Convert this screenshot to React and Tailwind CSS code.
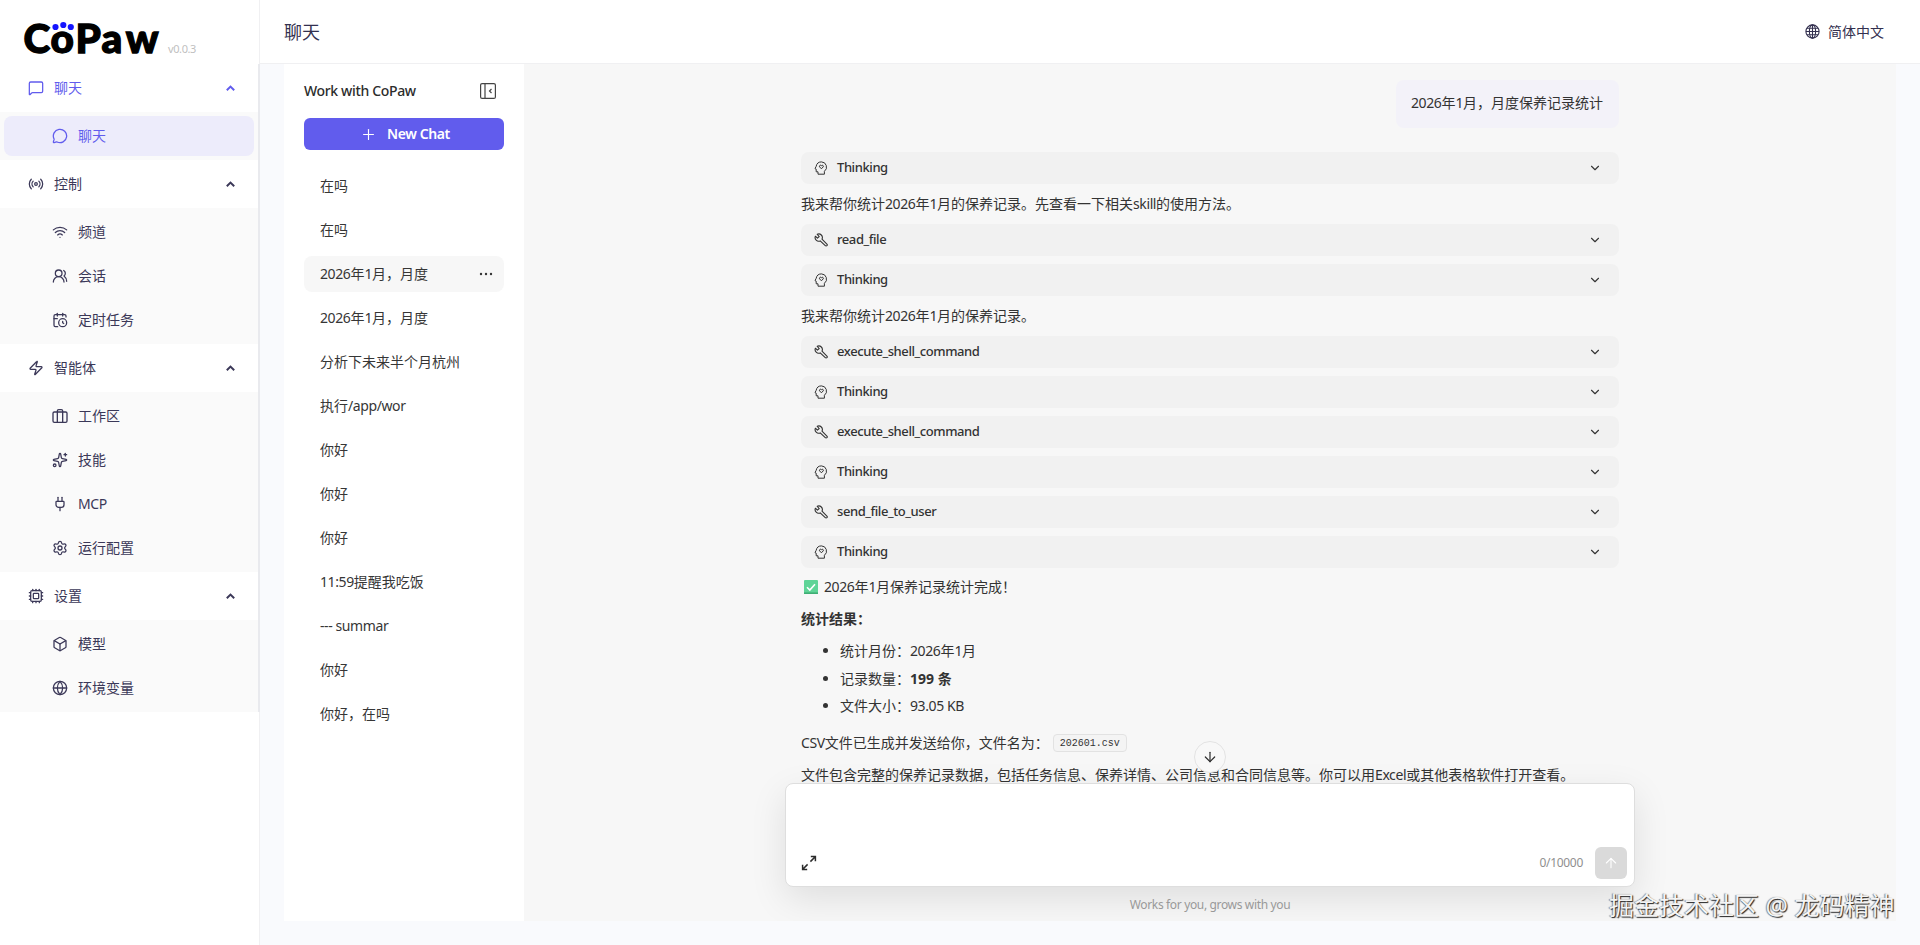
import React from 'react';
import {
    MessageSquare, MessageCircle, Radio, Wifi, UsersRound, CalendarClock, Zap,
    Sparkles, Plug, Settings, Cpu, Box, Globe, ChevronDown, ArrowDown, ArrowUp, Plus
} from 'lucide-react';

const menu = [
    {
        label: '聊天', icon: MessageSquare, active: true,
        items: [{ label: '聊天', icon: MessageCircle, active: true }],
    },
    {
        label: '控制', icon: Radio,
        items: [
            { label: '频道', icon: Wifi },
            { label: '会话', icon: UsersRound },
            { label: '定时任务', icon: CalendarClock },
        ],
    },
    {
        label: '智能体', icon: Zap,
        items: [
            { label: '工作区', icon: WorkspaceIcon },
            { label: '技能', icon: Sparkles },
            { label: 'MCP', icon: Plug },
            { label: '运行配置', icon: Settings },
        ],
    },
    {
        label: '设置', icon: Cpu,
        items: [
            { label: '模型', icon: Box },
            { label: '环境变量', icon: Globe },
        ],
    },
];

const chats = [
    '在吗', '在吗', '2026年1月，月度', '2026年1月，月度', '分析下未来半个月杭州', '执行/app/wor',
    '你好', '你好', '你好', '11:59提醒我吃饭', '--- summar', '你好', '你好，在吗',
];

// Latin letters and digits are set a little tighter than the Chinese around them
const Mixed = ({ children }) => (
    <span>
        {children.split(/([\x20-\x7e]+)/).map((part, i) => (
            i % 2 ? <span key={i} className="tracking-[-0.4px]">{part}</span> : part
        ))}
    </span>
);

function WorkspaceIcon({ className }) {
    return (
        <svg className={className} viewBox="0 0 24 24" fill="none" stroke="currentColor" strokeWidth="2" strokeLinejoin="round">
            <rect x="1.5" y="6" width="21" height="15.5" rx="2" />
            <path d="M8 21V4.5a2 2 0 0 1 2-2h4a2 2 0 0 1 2 2V21" />
        </svg>
    );
}

function Logo() {
    return (
        <svg className="w-[138px] h-[36px] overflow-visible font-['Lato',sans-serif] font-black" viewBox="0 0 138 36">
            <text x="0.6 27.6 52.4 78.5 102.8" y="32" fontSize="40.5" stroke="#000" strokeWidth="1.3">CoPaw</text>
            <circle cx="32.5" cy="6" r="3.1" fill="#1414ff" />
            <circle cx="40.3" cy="4" r="3.1" fill="#1414ff" />
            <circle cx="47.8" cy="6" r="3.1" fill="#1414ff" />
        </svg>
    );
}

function ThinkIcon() {
    return (
        <svg className="w-[14px] h-[14px]" viewBox="0 0 14 14" fill="none" stroke="currentColor" strokeWidth="1" strokeLinejoin="round">
            <path d="M4 13.2v-2.4H2.2V8.2L1 7.6l1.2-2.3A5.3 5.3 0 0 1 7.4.9a5.2 5.2 0 0 1 3 9.4v2.9z" />
            <path d="M7.4 7.8L5.6 5.9a1 1 0 0 1 1.8-1.2 1 1 0 0 1 1.8 1.2z" />
        </svg>
    );
}

function ToolIcon() {
    return (
        <svg className="w-[14px] h-[14px]" viewBox="0 0 14 14" fill="none" stroke="currentColor" strokeWidth="1.1" strokeLinejoin="round">
            <path d="M3.2 1.3A3.6 3.6 0 0 1 8 6.1l4.9 5a1.1 1.1 0 0 1-1.6 1.6L6.2 7.9A3.6 3.6 0 0 1 1.4 3.2l2 2 1.8-1.7z" />
        </svg>
    );
}

const LanguageIcon = () => (
    <svg className="w-[15px] h-[15px]" viewBox="0 0 15 15" fill="none" stroke="currentColor" strokeWidth="1.1">
        <circle cx="7.5" cy="7.5" r="6.6" />
        <ellipse cx="7.5" cy="7.5" rx="3.1" ry="6.6" />
        <path d="M7.5 1v13M1 7.5h13M1.9 4.3h11.2M1.9 10.7h11.2" />
    </svg>
);

const Sidebar = () => (
    <aside className="w-[260px] shrink-0 bg-white border-r border-[#f0f0f2]">
        <div className="h-16 pl-[23px] pt-[21px] flex items-start">
            <Logo />
            <span className="text-[11px] leading-[16px] tracking-[-0.4px] text-[#bfbfbf] mt-[20px] ml-[7px]">v0.0.3</span>
        </div>
        <nav className="border-r-2 border-[#e9eaee] -mr-px">
            {menu.map(({ label, icon: Icon, active, items }) => (
                <div key={label}>
                    <div className={`h-12 pl-7 pr-[23px] flex items-center ${active ? 'text-[#615ced]' : 'text-[#3b3858]'}`}>
                        <Icon className="w-4 h-4" strokeWidth={1.9} />
                        <span className="ml-[10px] -mt-[2px] flex-1">{label}</span>
                        <svg className="w-[9px] h-[6px]" viewBox="0 0 9 6" fill="none" stroke="currentColor" strokeWidth="2">
                            <path d="M.8 5.2l3.7-3.6 3.7 3.6" />
                        </svg>
                    </div>
                    <div className="bg-[#fafafa] px-1 py-1 flex flex-col gap-1">
                        {items.map(({ label: name, icon: ItemIcon, active: selected }) => (
                            <div
                                key={name}
                                className={`h-10 pl-12 rounded-lg flex items-center ${selected ? 'bg-[#edecfb] text-[#615ced]' : 'text-[#3b3858]'}`}
                            >
                                <ItemIcon className="w-4 h-4" strokeWidth={1.9} />
                                <span className="ml-[10px] -mt-[2px]"><Mixed>{name}</Mixed></span>
                            </div>
                        ))}
                    </div>
                </div>
            ))}
        </nav>
    </aside>
);

const ChatList = () => (
    <section className="w-60 shrink-0 bg-white px-5">
        <div className="h-[54px] flex items-center justify-between">
            <span className="font-medium tracking-[-0.35px] text-[#2c2c2c] -mt-px">Work with CoPaw</span>
            <svg className="w-4 h-4 mr-2 text-[#444]" viewBox="0 0 16 16" fill="none" stroke="currentColor" strokeWidth="1.2">
                <rect x=".6" y=".6" width="14.8" height="14.8" rx="1.5" />
                <path d="M5 1v14M11.5 6L9.5 8l2 2" />
            </svg>
        </div>
        <button className="w-full h-8 rounded-md bg-[#615ced] text-white font-semibold tracking-[-0.4px] flex items-center justify-center pl-[2px]">
            <Plus className="w-[17px] h-[17px] mr-[10px]" strokeWidth={1.6} />
            <span className="-mt-px">New Chat</span>
        </button>
        <div className="mt-[18px] flex flex-col gap-2">
            {chats.map((title, i) => (
                <div
                    key={i}
                    className={`h-9 px-4 pb-[2px] rounded-lg flex items-center justify-between text-[#363636] ${i === 2 ? 'bg-[#f7f7f7]' : ''}`}
                >
                    <Mixed>{title}</Mixed>
                    {i === 2 && (
                        <svg className="w-[14px] h-[4px] -mr-[5px] mt-px" viewBox="0 0 14 4" fill="currentColor">
                            <circle cx="2" cy="2" r="1.2" /><circle cx="7" cy="2" r="1.2" /><circle cx="12" cy="2" r="1.2" />
                        </svg>
                    )}
                </div>
            ))}
        </div>
    </section>
);

const Step = ({ name }) => (
    <div className="h-8 pl-[13px] pr-[14px] rounded-lg bg-[#f1f1f1] flex items-center text-[13px] font-medium">
        {name === 'Thinking' ? <ThinkIcon /> : <ToolIcon />}
        <span className="ml-[9px] flex-1 tracking-[-0.42px]">{name}</span>
        <ChevronDown className="w-[14px] h-[14px] mr-[3px]" strokeWidth={1.9} />
    </div>
);

const Conversation = () => (
    <div className="w-[818px] mx-auto text-[#333]">
        <div className="flex justify-end pt-4">
            <div className="h-12 pl-[15px] pr-4 pb-[3px] rounded-lg bg-[#f3f2f9] flex items-center"><Mixed>2026年1月，月度保养记录统计</Mixed></div>
        </div>
        <div className="mt-6 flex flex-col gap-2">
            <Step name="Thinking" />
            <p className="h-6 leading-6"><Mixed>我来帮你统计2026年1月的保养记录。先查看一下相关skill的使用方法。</Mixed></p>
            <Step name="read_file" />
            <Step name="Thinking" />
            <p className="h-6 leading-6"><Mixed>我来帮你统计2026年1月的保养记录。</Mixed></p>
            <Step name="execute_shell_command" />
            <Step name="Thinking" />
            <Step name="execute_shell_command" />
            <Step name="Thinking" />
            <Step name="send_file_to_user" />
            <Step name="Thinking" />
            <div className="leading-6 -mt-px">
                <p className="flex items-center">
                    <svg className="w-[14px] h-[14px] ml-[3px] mr-[6px]" viewBox="0 0 14 14">
                        <rect width="14" height="14" rx="1" fill="#5fd497" />
                        <path d="M0 13.2h14" stroke="#3fae74" strokeWidth="1.6" />
                        <path d="M3 7.2l2.8 2.8L11 4.2" fill="none" stroke="#fff" strokeWidth="1.6" />
                    </svg>
                    <Mixed>2026年1月保养记录统计完成！</Mixed>
                </p>
                <p className="mt-2 font-bold">统计结果：</p>
                <ul className="mt-[6px] pl-[39px] list-disc leading-[27.5px]">
                    <li><Mixed>统计月份：2026年1月</Mixed></li>
                    <li>记录数量：<b>199 条</b></li>
                    <li><Mixed>文件大小：93.05 KB</Mixed></li>
                </ul>
                <p className="mt-[11px] flex items-center">
                    <Mixed>CSV文件已生成并发送给你，文件名为：</Mixed>
                    <code className="ml-1 h-[18px] px-[6px] rounded border border-[#e2e2e2] bg-[#f4f4f4] font-['Liberation_Mono',monospace] text-[10px] leading-[17px]">202601.csv</code>
                </p>
                <p className="mt-2"><Mixed>文件包含完整的保养记录数据，包括任务信息、保养详情、公司信息和合同信息等。你可以用Excel或其他表格软件打开查看。</Mixed></p>
            </div>
        </div>
    </div>
);

const Composer = () => (
    <div className="relative w-[850px] mx-auto">
        <div className="absolute -top-[42px] left-[409px] w-8 h-8 rounded-full bg-[#f8f8f8] border border-[#e3e3e3] flex items-center justify-center">
            <ArrowDown className="w-4 h-4 text-[#2c2c2c]" strokeWidth={1.8} />
        </div>
        <div className="h-[104px] rounded-lg border border-[#dedede] bg-white shadow-[0_12px_36px_rgba(0,0,0,0.1)] flex items-end justify-between pl-[15px] pr-[7px] pb-[7px]">
            <svg className="w-4 h-4 mb-[8px] text-[#2c2c2c]" viewBox="0 0 16 16" fill="none" stroke="currentColor" strokeWidth="1.5">
                <path d="M9.8 1.6h4.6v4.6M14.2 1.8L9.4 6.6M1.6 9.8v4.6h4.6M1.8 14.2l4.8-4.8" />
            </svg>
            <div className="flex items-center gap-3">
                <span className="text-[12px] tracking-[-0.3px] text-[#8f8f8f]">0/10000</span>
                <div className="w-8 h-8 rounded-md bg-[#dadada] flex items-center justify-center">
                    <ArrowUp className="w-4 h-4 text-white" strokeWidth={1.6} />
                </div>
            </div>
        </div>
        <p className="relative h-[34px] leading-9 text-center text-[12px] tracking-[-0.35px] text-[#999]">Works for you, grows with you</p>
    </div>
);

const App = () => (
    <div className="h-[945px] w-[1920px] relative overflow-hidden flex text-[14px] font-['Noto_Sans','Noto_Sans_CJK_SC',sans-serif]">
        <Sidebar />
        <div className="flex-1 flex flex-col bg-[#f9fafd]">
            <header className="h-16 shrink-0 bg-white border-b border-[#f0f0f2] px-6 flex items-center justify-between text-[#33304f]">
                <h1 className="text-[18px] pt-px">聊天</h1>
                <div className="flex items-center gap-2 pr-3">
                    <LanguageIcon />
                    <span className="-mt-px">简体中文</span>
                </div>
            </header>
            <main className="h-[857px] mx-6 flex">
                <ChatList />
                <div className="flex-1 bg-[#f7f7f7] flex flex-col overflow-hidden">
                    <div className="h-[719px] shrink-0">
                        <Conversation />
                    </div>
                    <Composer />
                </div>
            </main>
        </div>
        <div className="absolute left-[1609px] top-[888px] text-[25px] leading-[34px] whitespace-nowrap text-[#f4f4f4] [text-shadow:1px_1px_1px_#222,-1px_0_1px_#888]">
            掘金技术社区 @ 龙码精神
        </div>
    </div>
);

export default App;
